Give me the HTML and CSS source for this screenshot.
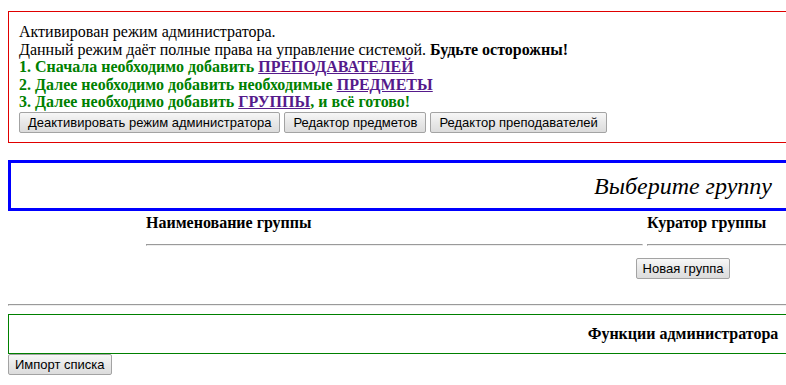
FILE: index.html
```html
<!DOCTYPE html>
<html lang="ru">
<head>
    <meta charset="UTF-8">
    <title>Группы - режим администратора</title>
    <link rel="stylesheet" href="styles.css">
</head>
<body>
    <div class="screen">
        <div class="page">
            <div class="admin-notice">
                <div class="line">Активирован режим администратора.</div>
                <div class="line">Данный режим даёт полные права на управление системой. <b>Будьте осторожны!</b></div>
                <div class="line step">1. Сначала необходимо добавить <a href="#">ПРЕПОДАВАТЕЛЕЙ</a></div>
                <div class="line step">2. Далее необходимо добавить необходимые <a href="#">ПРЕДМЕТЫ</a></div>
                <div class="line step">3. Далее необходимо добавить <a href="#">ГРУППЫ</a>, и всё готово!</div>
                <div class="btn-row">
                    <button class="btn">Деактивировать режим администратора</button>
                    <button class="btn">Редактор предметов</button>
                    <button class="btn">Редактор преподавателей</button>
                </div>
            </div>

            <div class="title-box">Выберите группу</div>

            <table class="groups">
                <tr>
                    <th class="col-name">Наименование группы</th>
                    <th>Куратор группы</th>
                </tr>
                <tr>
                    <td><hr></td>
                    <td><hr></td>
                </tr>
                <tr>
                    <td colspan="2" class="add-cell"><button class="btn btn-small">Новая группа</button></td>
                </tr>
            </table>

            <hr class="divider">

            <div class="functions-box">Функции администратора</div>
            <button class="btn btn-small btn-block">Импорт списка</button>
        </div>
    </div>
</body>
</html>
```

FILE: styles.css
```css
html, body {
    margin: 0;
    overflow: hidden;
}

body {
    font-family: "Liberation Serif", "Times New Roman", serif;
    font-size: 16px;
    color: #000;
}

.screen {
    overflow: hidden;
    padding: 8px 0 0 8px;
}

.page {
    width: 1350px;
}

.admin-notice {
    margin-top: 3px;
    border: 1px solid #e00000;
    padding: 11px 10px 9px 10px;
}

.admin-notice .line {
    line-height: 17.6px;
}

.admin-notice .step {
    color: #008000;
    font-weight: bold;
}

.admin-notice a {
    color: #551a8b;
}

.btn-row {
    display: flex;
    gap: 4px;
    margin-top: 1px;
}

.btn {
    font-family: "Liberation Sans", Arial, sans-serif;
    font-size: 13px;
    color: #000;
    height: 21px;
    padding: 0 8px;
    border: 1px solid #a3a3a3;
    border-radius: 2px;
    background: linear-gradient(#f7f7f7, #e8e8e8 50%, #dcdcdc);
}

.btn-small {
    padding: 0 6px;
}

.title-box {
    margin-top: 17px;
    border: 3px solid #0000ff;
    padding: 8px 0 7px;
    font-size: 24px;
    line-height: 30px;
    font-style: italic;
    text-align: center;
}

.groups {
    width: 1080px;
    margin: 0 auto;
    border-spacing: 2px;
}

.groups th {
    text-align: left;
    padding: 1px;
    line-height: 18px;
}

.groups td {
    padding: 1px;
}

.groups .col-name {
    width: 497px;
}

.groups hr {
    margin: 8px 0;
}

.add-cell {
    text-align: center;
}

.divider {
    margin: 22px 0 8px;
}

.functions-box {
    border: 1px solid #008000;
    height: 38px;
    line-height: 38px;
    font-weight: bold;
    text-align: center;
}

.btn-block {
    display: block;
    height: 21px;
}
```
